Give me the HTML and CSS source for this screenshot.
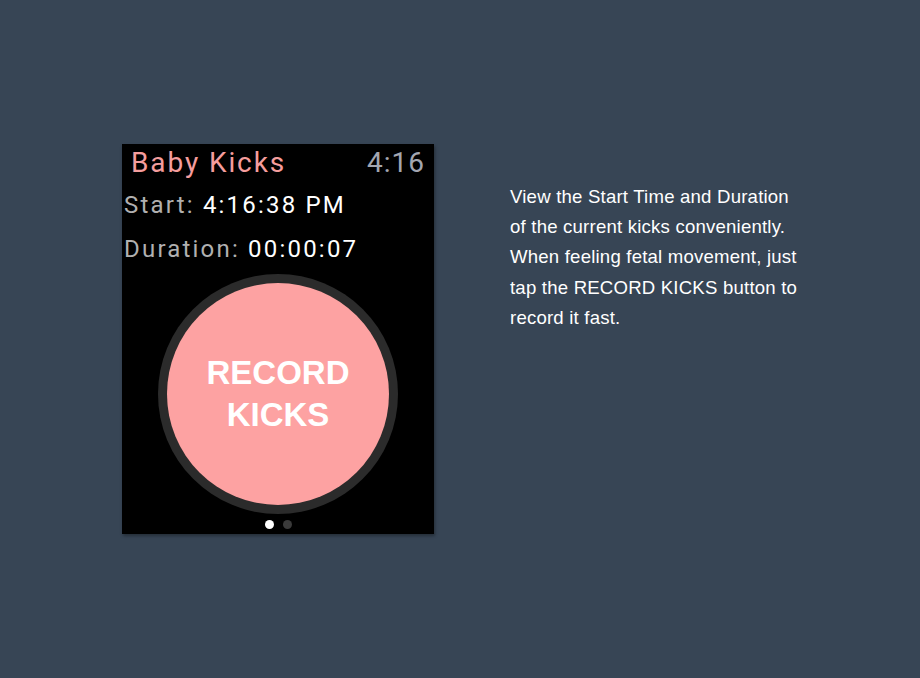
FILE: index.html
```html
<!DOCTYPE html>
<html>
<head>
<meta charset="utf-8">
<link rel="stylesheet" href="styles.css">
</head>
<body>
<main class="stage">
  <section class="watch">
    <header class="topbar">
      <span class="app-title">Baby Kicks</span>
      <span class="clock">4:16</span>
    </header>
    <div class="row"><span class="label">Start:</span> <span class="value">4:16:38 PM</span></div>
    <div class="row"><span class="label">Duration:</span> <span class="value">00:00:07</span></div>
    <div class="btn-wrap">
      <div class="ring">
        <button class="record">RECORD<br>KICKS</button>
      </div>
    </div>
    <div class="dots"><span class="dot on"></span><span class="dot"></span></div>
  </section>
  <p class="desc">View the Start Time and Duration of the current kicks conveniently. When feeling fetal movement, just tap the RECORD KICKS button to record it fast.</p>
</main>
</body>
</html>
```
FILE: styles.css
```css
html, body {
  margin: 0;
  padding: 0;
  background: #374555;
  width: 920px;
  height: 678px;
  overflow: hidden;
}
.stage {
  display: flex;
  align-items: flex-start;
  padding: 144px 0 0 122px;
}
.watch {
  width: 312px;
  height: 390px;
  background: #000;
  box-shadow: 1px 2px 3px rgba(0,0,0,0.35);
  font-family: Roboto, "Open Sans", sans-serif;
  display: flex;
  flex-direction: column;
  box-sizing: border-box;
  padding: 0 10px 0 2px;
}
.topbar {
  display: flex;
  justify-content: space-between;
  align-items: baseline;
  height: 38px;
  line-height: 38px;
  padding-left: 7px;
}
.app-title {
  color: #f59d9d;
  font-size: 28px;
  letter-spacing: 1.9px;
}
.clock {
  color: #a3a6b0;
  font-size: 28px;
  letter-spacing: 1px;
  margin-right: -1px;
}
.row {
  font-size: 24px;
  line-height: 44px;
  height: 44px;
  white-space: nowrap;
  letter-spacing: 2.2px;
  padding-top: 1px;
}
.row:nth-child(3) { margin-top: -1px; }
.label { color: #b0b0b0; }
.value { color: #fff; }
.btn-wrap {
  display: flex;
  justify-content: center;
  margin-top: 3px;
  padding-left: 8px;
}
.ring {
  width: 240px;
  height: 240px;
  border-radius: 50%;
  background: #2b2b2b;
  display: flex;
  align-items: center;
  justify-content: center;
}
.record {
  width: 222px;
  height: 222px;
  border-radius: 50%;
  border: none;
  background: #fda2a2;
  color: #fff;
  font-family: "Liberation Sans", Arial, sans-serif;
  font-weight: bold;
  font-size: 33px;
  line-height: 42px;
  padding: 0;
}
.dots {
  display: flex;
  justify-content: center;
  gap: 9px;
  margin-top: 6px;
  padding-left: 8px;
}
.dot {
  width: 9px;
  height: 9px;
  border-radius: 50%;
  background: #3a3a3a;
}
.dot.on { background: #fff; }
.desc {
  margin: 38px 0 0 76px;
  width: 292px;
  color: #fff;
  font-family: "Liberation Sans", Arial, sans-serif;
  font-size: 18.6px;
  letter-spacing: 0.2px;
  line-height: 30.2px;
}
```
